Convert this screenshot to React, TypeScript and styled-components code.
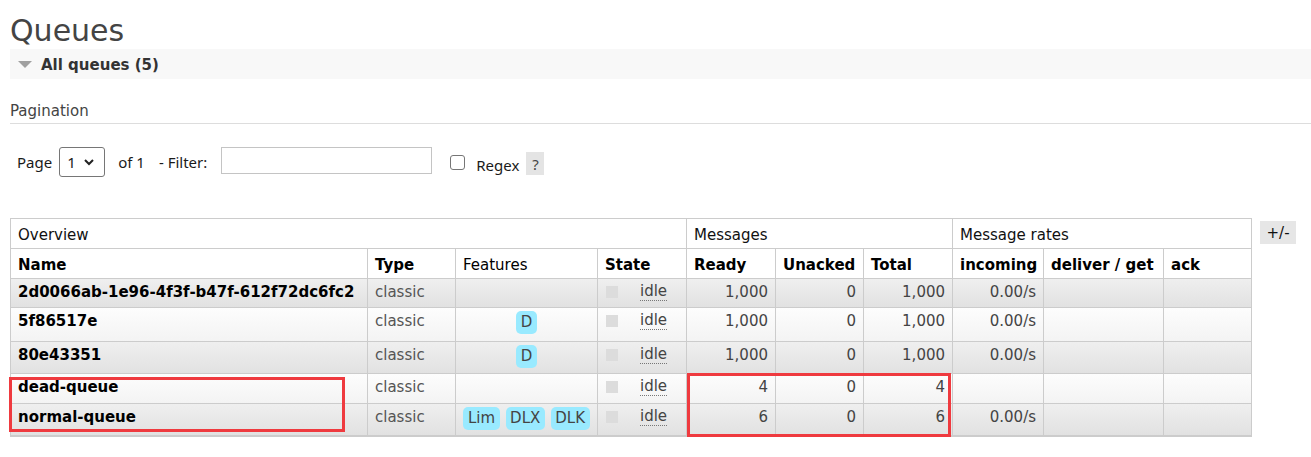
import React from "react";
import styled, { createGlobalStyle } from "styled-components";

const Global = createGlobalStyle`
  html, body { margin: 0; padding: 0; background: #fff; }
  body {
    font-family: "DejaVu Sans", Verdana, sans-serif;
    font-size: 15px;
    color: #444;
  }
`;

const Page = styled.div`
  padding-left: 10px;
`;

const Title = styled.h1`
  margin: 13px 0 0;
  font-size: 30px;
  font-weight: normal;
  line-height: 36px;
  color: #444;
`;

const SectionBar = styled.div`
  display: flex;
  align-items: center;
  gap: 9px;
  height: 30px;
  padding: 1px 0 0 8px;
  box-sizing: border-box;
  background: #f8f8f8;
  font-weight: bold;
  color: #333;
`;

const SubHeading = styled.div`
  margin-top: 22px;
  padding-bottom: 2px;
  line-height: 20px;
  border-bottom: 1px solid #ddd;
  color: #444;
`;

const PagerRow = styled.div`
  display: flex;
  align-items: center;
  height: 30px;
  margin: 23px 0 0 7px;
  font-family: "Noto Sans", "Open Sans", sans-serif;
  font-size: 15px;
  color: #1a1a1a;
`;

const PagerText = styled.span<{ $ml?: number }>`
  margin-left: ${(p) => p.$ml ?? 0}px;
  white-space: nowrap;
`;

const SelectWrap = styled.div`
  position: relative;
  margin-left: 7px;
  width: 46px;
  height: 30px;
`;

const Select = styled.select`
  appearance: none;
  box-sizing: border-box;
  width: 100%;
  height: 100%;
  padding: 0 0 0 7px;
  border: 1px solid #767676;
  border-radius: 3px;
  background: #fff;
  font: inherit;
  color: #1a1a1a;
`;

const Chevron = styled.svg`
  position: absolute;
  left: 25px;
  top: 12px;
  pointer-events: none;
`;

const FilterInput = styled.input`
  box-sizing: border-box;
  width: 211px;
  height: 27px;
  margin: 0 0 3px 14px;
  border: 1px solid #c4c4c4;
  border-radius: 0;
  font: inherit;
`;

const Checkbox = styled.input`
  appearance: none;
  box-sizing: border-box;
  width: 15px;
  height: 15px;
  margin: 0 0 0 18px;
  border: 1px solid #767676;
  border-radius: 3px;
  background: #fff;
`;

const RegexLabel = styled.span`
  margin: 6px 0 0 11px;
`;

const HelpBox = styled.span`
  display: inline-flex;
  align-items: center;
  justify-content: center;
  width: 18px;
  height: 23px;
  margin: 3px 0 0 7px;
  background: #e4e4e4;
  color: #444;
`;

const TableArea = styled.div`
  display: flex;
  align-items: flex-start;
  gap: 8px;
  margin-top: 41px;
`;

const TableWrap = styled.div`
  position: relative;
`;

const Table = styled.table`
  width: 1241px;
  border-collapse: collapse;
  table-layout: fixed;
  border-bottom: 2px solid #ccc;
`;

const GroupTh = styled.th`
  height: 30px;
  box-sizing: border-box;
  padding: 6px 8px 0 7px;
  border: 1px solid #ccc;
  background: #fff;
  font-weight: normal;
  text-align: left;
  vertical-align: top;
  line-height: 20px;
  color: #111;
`;

const ColTh = styled.th<{ $bold?: boolean }>`
  height: 30px;
  box-sizing: border-box;
  padding: 6px 7px 0 7px;
  border: 1px solid #ccc;
  background: #fff;
  font-weight: ${(p) => (p.$bold === false ? "normal" : "bold")};
  text-align: left;
  vertical-align: top;
  line-height: 20px;
  color: #000;
  white-space: nowrap;
  overflow: hidden;
`;

const Row = styled.tr<{ $alt: boolean; $h: number }>`
  height: ${(p) => p.$h}px;
  background: ${(p) =>
    p.$alt
      ? "linear-gradient(#efefef, #e1e1e1)"
      : "linear-gradient(#fdfdfd, #f3f3f3)"};
`;

const Td = styled.td<{ $align?: "left" | "right" | "center" }>`
  padding: 3px 7px 0 7px;
  border: 1px solid #ccc;
  vertical-align: top;
  line-height: 20px;
  text-align: ${(p) => p.$align ?? "left"};
  white-space: nowrap;
  overflow: visible;
`;

const NameCell = styled(Td)`
  font-weight: bold;
  color: #000;
`;

const TypeCell = styled(Td)`
  color: #555;
`;

const NumCell = styled(Td)`
  padding-right: 7px;
  color: #444;
`;

const BadgeList = styled.div`
  display: inline-flex;
  gap: 6px;
`;

const Badge = styled.span`
  display: inline-block;
  padding: 0 4.5px;
  line-height: 23px;
  border-radius: 5px;
  background: #99eaff;
  color: #444;
`;

const StateBox = styled.div`
  display: flex;
  align-items: flex-start;
  gap: 22px;
  padding-left: 1px;
`;

const StateDot = styled.span`
  width: 12px;
  height: 12px;
  margin-top: 4px;
  background: #dcdcdc;
  flex: none;
`;

const StateText = styled.abbr`
  color: #444;
  text-decoration: none;
  border-bottom: 1px dotted #777;
  line-height: 18px;
`;

const ToggleButton = styled.span`
  display: inline-flex;
  align-items: center;
  justify-content: center;
  width: 36px;
  height: 23px;
  margin-top: 3px;
  background: #e6e6e6;
  color: #111;
`;

const Highlight = styled.div<{ $l: number; $t: number; $w: number; $h: number }>`
  position: absolute;
  left: ${(p) => p.$l}px;
  top: ${(p) => p.$t}px;
  width: ${(p) => p.$w}px;
  height: ${(p) => p.$h}px;
  box-sizing: border-box;
  border: 3px solid #ef3a3f;
  pointer-events: none;
`;

type Queue = {
  name: string;
  features: string[];
  ready: string;
  unacked: string;
  total: string;
  incoming: string;
  h: number;
};

const queues: Queue[] = [
  { name: "2d0066ab-1e96-4f3f-b47f-612f72dc6fc2", features: [], ready: "1,000", unacked: "0", total: "1,000", incoming: "0.00/s", h: 29 },
  { name: "5f86517e", features: ["D"], ready: "1,000", unacked: "0", total: "1,000", incoming: "0.00/s", h: 34 },
  { name: "80e43351", features: ["D"], ready: "1,000", unacked: "0", total: "1,000", incoming: "0.00/s", h: 32 },
  { name: "dead-queue", features: [], ready: "4", unacked: "0", total: "4", incoming: "", h: 30 },
  { name: "normal-queue", features: ["Lim", "DLX", "DLK"], ready: "6", unacked: "0", total: "6", incoming: "0.00/s", h: 32 },
];

const colWidths = [357, 88, 142, 89, 89, 88, 89, 91, 120, 88];

export default function App() {
  return (
    <>
      <Global />
      <Page>
        <Title>Queues</Title>
        <SectionBar>
          <svg width="14" height="7" viewBox="0 0 14 7">
            <polygon points="0,0 14,0 7,7" fill="#a0a0a0" />
          </svg>
          <span>All queues (5)</span>
        </SectionBar>

        <SubHeading>Pagination</SubHeading>

        <PagerRow>
          <PagerText>Page</PagerText>
          <SelectWrap>
            <Select defaultValue="1">
              <option value="1">1</option>
            </Select>
            <Chevron width="10" height="7" viewBox="0 0 10 7">
              <polyline points="1,1 5,5 9,1" fill="none" stroke="#222" strokeWidth="2" />
            </Chevron>
          </SelectWrap>
          <PagerText $ml={13}>of 1</PagerText>
          <PagerText $ml={14}>- Filter:</PagerText>
          <FilterInput type="text" />
          <Checkbox type="checkbox" />
          <RegexLabel>Regex</RegexLabel>
          <HelpBox>?</HelpBox>
        </PagerRow>

        <TableArea>
          <TableWrap>
            <Table>
              <colgroup>
                {colWidths.map((w, i) => (
                  <col key={i} style={{ width: w }} />
                ))}
              </colgroup>
              <thead>
                <tr>
                  <GroupTh colSpan={4}>Overview</GroupTh>
                  <GroupTh colSpan={3}>Messages</GroupTh>
                  <GroupTh colSpan={3}>Message rates</GroupTh>
                </tr>
                <tr>
                  <ColTh>Name</ColTh>
                  <ColTh>Type</ColTh>
                  <ColTh $bold={false}>Features</ColTh>
                  <ColTh>State</ColTh>
                  <ColTh>Ready</ColTh>
                  <ColTh>Unacked</ColTh>
                  <ColTh>Total</ColTh>
                  <ColTh>incoming</ColTh>
                  <ColTh>deliver / get</ColTh>
                  <ColTh>ack</ColTh>
                </tr>
              </thead>
              <tbody>
                {queues.map((q, i) => (
                  <Row key={q.name} $alt={i % 2 === 0} $h={q.h}>
                    <NameCell>{q.name}</NameCell>
                    <TypeCell>classic</TypeCell>
                    <Td $align="center">
                      {q.features.length > 0 && (
                        <BadgeList>
                          {q.features.map((f) => (
                            <Badge key={f}>{f}</Badge>
                          ))}
                        </BadgeList>
                      )}
                    </Td>
                    <Td>
                      <StateBox>
                        <StateDot />
                        <StateText title="idle">idle</StateText>
                      </StateBox>
                    </Td>
                    <NumCell $align="right">{q.ready}</NumCell>
                    <NumCell $align="right">{q.unacked}</NumCell>
                    <NumCell $align="right">{q.total}</NumCell>
                    <NumCell $align="right">{q.incoming}</NumCell>
                    <Td />
                    <Td />
                  </Row>
                ))}
              </tbody>
            </Table>
            <Highlight $l={-1} $t={159} $w={336} $h={55} />
            <Highlight $l={677} $t={155} $w={264} $h={64} />
          </TableWrap>
          <ToggleButton>+/-</ToggleButton>
        </TableArea>
      </Page>
    </>
  );
}
